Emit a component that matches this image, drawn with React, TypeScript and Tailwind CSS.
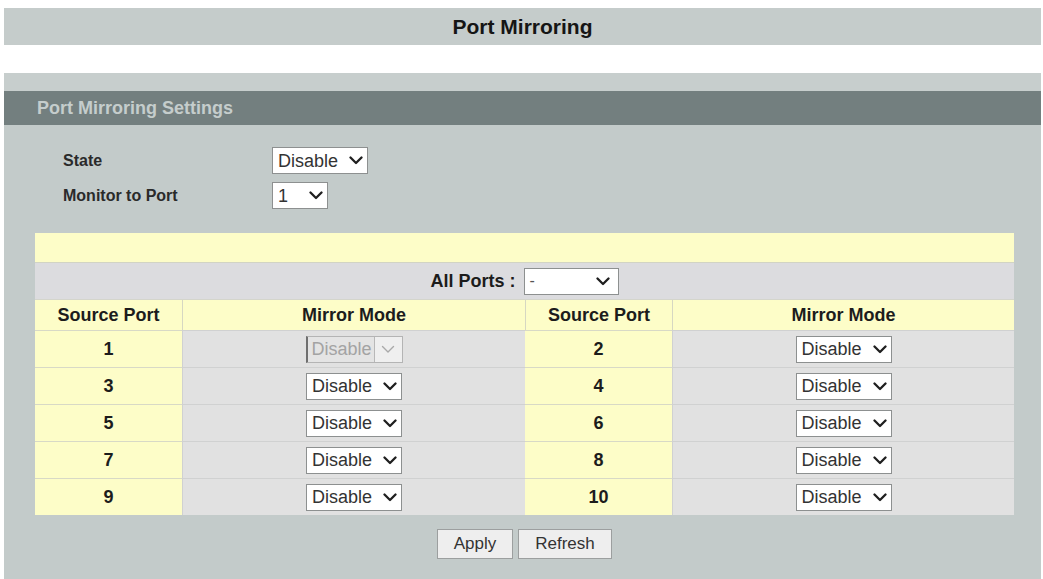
import React from 'react';

function Chevron({ light }: { light?: boolean }) {
    return (
        <svg width="14" height="9" viewBox="0 0 14 9" className="shrink-0">
            <polyline
                points="1.5,1.5 7,7 12.5,1.5"
                fill="none"
                stroke={light ? '#a9a9a9' : '#1f1f1f'}
                strokeWidth={light ? 1.4 : 2.3}
                strokeLinecap="round"
                strokeLinejoin="round"
            />
        </svg>
    );
}

function Select({ value, width }: { value: string; width: string }) {
    return (
        <div
            className={`${width} h-[27px] flex items-center justify-between bg-white border border-[#8d9090] pl-[5px] pr-[4px] text-[18px] text-[#333] leading-none`}
        >
            <span>{value}</span>
            <Chevron />
        </div>
    );
}

function DisabledSelect() {
    return (
        <div className="w-[97px] h-[27px] flex items-stretch bg-[#e4e4e4] border border-[#b4b4b4] border-l-[#6f6f6f] border-l-2 text-[18px] text-[#a3a3a3] leading-none">
            <span className="flex-1 flex items-center pl-[4px]">Disable</span>
            <span className="w-[28px] flex items-center justify-center bg-[#efefef] border-l border-[#b8b8b8]">
                <Chevron light />
            </span>
        </div>
    );
}

const rows = [
    [1, 2],
    [3, 4],
    [5, 6],
    [7, 8],
    [9, 10],
];

export default function App() {
    return (
        <div className="w-[1043px] h-[579px] overflow-hidden bg-white font-['Liberation_Sans',Arial,sans-serif]">
            {/* Page title */}
            <div className="pt-[8px] pl-[4px] pr-[2px]">
                <div className="h-[37px] bg-[#c5cccb] flex items-center justify-center text-[21px] font-bold text-[#151515]">
                    Port Mirroring
                </div>
            </div>

            {/* Settings panel */}
            <div className="mt-[28px] ml-[4px] mr-[2px] h-[506px] bg-[#c3cbca]">
                <div className="h-[18px] bg-[#c7cecd]" />
                <div className="h-[34px] bg-[#737f7f] flex items-center pl-[33px] text-[18px] font-bold text-[#c5cdcc]">
                    Port Mirroring Settings
                </div>

                <div className="pt-[22px] pl-[59px] flex flex-col gap-[8px]">
                    <div className="flex items-center h-[27px]">
                        <span className="w-[209px] text-[16px] font-bold text-[#2a2a2a]">State</span>
                        <Select value="Disable" width="w-[96px]" />
                    </div>
                    <div className="flex items-center h-[27px]">
                        <span className="w-[209px] text-[16px] font-bold text-[#2a2a2a]">Monitor to Port</span>
                        <Select value="1" width="w-[56px]" />
                    </div>
                </div>

                {/* Port table */}
                <div className="mt-[24px] ml-[31px] w-[979px]">
                    <div className="h-[30px] bg-[#fdfdc8] border-b border-[#d2d4c4]" />
                    <div className="h-[37px] bg-[#dcdcdf] flex items-center justify-center gap-[8px] border-b border-[#d4d5cc]">
                        <span className="text-[18px] font-bold text-[#1c1c1c]">All Ports :</span>
                        <div className="w-[95px] h-[27px] flex items-center justify-between bg-white border border-[#8d9090] pl-[5px] pr-[8px] text-[16px] text-[#555]">
                            <span>-</span>
                            <Chevron />
                        </div>
                    </div>
                    <div className="grid grid-cols-[147px_343px_147px_342px] text-[18px] font-bold text-[#1c1c1c]">
                        <div className="h-[30px] flex items-center justify-center bg-[#fdfdc8]">Source Port</div>
                        <div className="h-[30px] flex items-center justify-center bg-[#fdfdc8] border-l border-[#d6d7c2]">Mirror Mode</div>
                        <div className="h-[30px] flex items-center justify-center bg-[#fdfdc8] border-l border-[#d6d7c2]">Source Port</div>
                        <div className="h-[30px] flex items-center justify-center bg-[#fdfdc8] border-l border-[#d6d7c2]">Mirror Mode</div>
                        {rows.map(([a, b]) => (
                            <React.Fragment key={a}>
                                <div className="h-[37px] flex items-center justify-center bg-[#fdfdc8] border-t border-[#d8d9c6]">{a}</div>
                                <div className="h-[37px] flex items-center justify-center bg-[#e1e1e1] border-t border-l border-[#d0d1d1] font-normal">
                                    {a === 1 ? <DisabledSelect /> : <Select value="Disable" width="w-[96px]" />}
                                </div>
                                <div className="h-[37px] flex items-center justify-center bg-[#fdfdc8] border-t border-[#d8d9c6]">{b}</div>
                                <div className="h-[37px] flex items-center justify-center bg-[#e1e1e1] border-t border-l border-[#d0d1d1] font-normal">
                                    <Select value="Disable" width="w-[96px]" />
                                </div>
                            </React.Fragment>
                        ))}
                    </div>

                    <div className="mt-[14px] flex justify-center gap-[5px]">
                        <button className="w-[76px] h-[30px] bg-[#eeeeee] border border-[#9c9f9f] text-[17px] text-[#333]">
                            Apply
                        </button>
                        <button className="w-[94px] h-[30px] bg-[#eeeeee] border border-[#9c9f9f] text-[17px] text-[#333]">
                            Refresh
                        </button>
                    </div>
                </div>
            </div>
        </div>
    );
}
